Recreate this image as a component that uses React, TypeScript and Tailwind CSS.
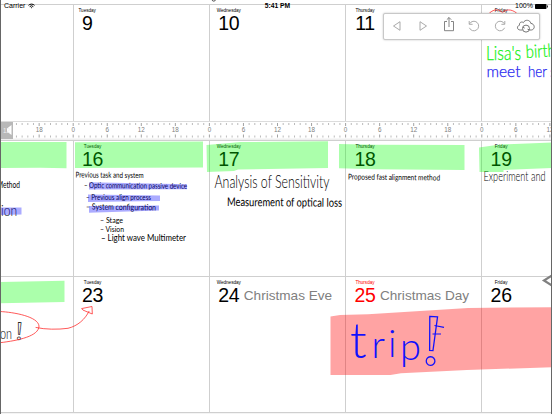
import type { ReactNode } from "react";

type Day = { name: string; num?: string; note?: string; holiday?: boolean };

const WEEKS: Day[][] = [
  [
    { name: "" },
    { name: "Tuesday", num: "9" },
    { name: "Wednesday", num: "10" },
    { name: "Thursday", num: "11" },
    { name: "Friday", num: "12" },
  ],
  [
    { name: "" },
    { name: "Tuesday", num: "16" },
    { name: "Wednesday", num: "17" },
    { name: "Thursday", num: "18" },
    { name: "Friday", num: "19" },
  ],
  [
    { name: "" },
    { name: "Tuesday", num: "23" },
    { name: "Wednesday", num: "24", note: "Christmas Eve" },
    { name: "Thursday", num: "25", note: "Christmas Day", holiday: true },
    { name: "Friday", num: "26" },
  ],
];

const DAY_WIDTH = 136.2;
const HOUR = DAY_WIDTH / 24;

// ink notes written on top of the calendar
const NOTES = [
  { text: "Previous task and system", x: 75.5, y: 177.5, w: 68, size: 8, tilt: 0.5 },
  { text: "– Optic communication passive device", x: 84, y: 188, w: 103, size: 8, tilt: 0.5 },
  { text: "– Previous align process", x: 86, y: 199.5, w: 65, size: 8, tilt: 0 },
  { text: "– System configuration", x: 86, y: 209.5, w: 70, size: 8.5, tilt: 0.8 },
  { text: "– Stage", x: 100, y: 222.5, w: 23, size: 7.5, tilt: 0 },
  { text: "– Vision", x: 100, y: 231.5, w: 24, size: 7.5, tilt: 0 },
  { text: "– Light wave Multimeter", x: 101, y: 240.5, w: 85, size: 9, tilt: 0 },
  { text: "Method", x: -3, y: 188, w: 23, size: 9, tilt: 0 },
  { text: "Analysis of Sensitivity", x: 214.5, y: 188, w: 115, size: 17, tilt: 0 },
  { text: "Measurement of optical loss", x: 227, y: 206, w: 115, size: 12, tilt: 0.4 },
  { text: "Proposed fast alignment method", x: 348, y: 179.5, w: 92, size: 8, tilt: 0.6 },
  { text: "Experiment and", x: 483.5, y: 181, w: 62, size: 13, tilt: 0 },
];

function DayLabel({ day }: { day: Day }) {
  if (!day.num) return null;
  const color = day.holiday ? "text-[#ff0000]" : "text-black";
  const indent = day.num.length === 1 ? "pl-[2.4px]" : "pl-[7.8px]";
  return (
    <div className={`flex items-end pt-[4px] ${indent} ${color}`}>
      <div className="flex w-[22px] flex-col items-center">
        <span className="h-[4.6px] whitespace-nowrap text-[4.6px] leading-[4.6px]">{day.name}</span>
        <span className="text-[19.5px] leading-[18px] tracking-[-0.3px]">{day.num}</span>
      </div>
      {day.note && (
        <span className="ml-[4px] whitespace-nowrap text-[13.6px] leading-[16px] text-[#808080]">{day.note}</span>
      )}
    </div>
  );
}

function Ruler() {
  const hours = Array.from({ length: 109 }, (_, i) => i);
  return (
    <svg className="block h-[19px] w-[615px]" viewBox="0 0 615 19">
      <rect width="615" height="19" fill="#fff" />
      <rect width="615" height="1" fill="#dcdcdc" />
      <rect y="17.5" width="615" height="1.5" fill="#efefef" />
      {hours.map((h) => (
        <g key={h} stroke={h % 6 === 0 ? "#8a8a8a" : "#a8a8a8"} strokeWidth="0.8">
          <line x1={h * HOUR} x2={h * HOUR} y1="2" y2={h % 6 === 0 ? 5 : 4} />
          <line x1={h * HOUR} x2={h * HOUR} y1={h % 6 === 0 ? 13.5 : 14.5} y2="16.5" />
        </g>
      ))}
      {hours
        .filter((h) => h % 6 === 0 && h !== 6)
        .map((h) => (
          <text key={h} x={h * HOUR} y="11" textAnchor="middle" fontSize="6.3" fill="#808080">
            {h % 24}
          </text>
        ))}
    </svg>
  );
}

function ToolButton({ children }: { children: ReactNode }) {
  return (
    <button className="flex h-6 flex-1 items-center justify-center">
      <svg className="h-5 w-5" viewBox="0 0 20 20" fill="none" stroke="#a0a0a0" strokeWidth="0.9">
        {children}
      </svg>
    </button>
  );
}

function Toolbar() {
  return (
    <div className="absolute left-[383px] top-[12.5px] flex h-[27px] w-[157px] items-center rounded-[2px] border border-[#c8c8c8] bg-white shadow-[0_0_2px_rgba(0,0,0,0.25)]">
      <ToolButton>
        <path d="M13 5.7v8.6L6.5 10z" />
      </ToolButton>
      <ToolButton>
        <path d="M7 5.7v8.6l6.5-4.3z" />
      </ToolButton>
      <ToolButton>
        <path d="M8 5.500H5.500v9.200h9V5.500H12M10 11V1.500M7.800 3.700 10 1.500l2.200 2.200" stroke="#777" />
      </ToolButton>
      <ToolButton>
        <path d="M5.600 7.800A4.800 4.800 0 1 1 5.400 11.800M5.200 5v3.300h3.400" />
      </ToolButton>
      <ToolButton>
        <path d="M14.400 7.800a4.800 4.800 0 1 0 .2 4M14.800 5v3.300h-3.400" />
      </ToolButton>
      <ToolButton>
        <path
          d="M6.500 14H4.300C.8 14 .6 10 3.500 9.200 3 6 6.300 5.300 7.300 6.700 9 3 14.400 3.800 14.800 7.400c4 .2 4.800 6 .6 6.600H13.500"
          stroke="#666"
        />
        <circle cx="10" cy="12.600" r="3.500" stroke="#666" />
        <path d="M6.700 11.300l2 .8M11.500 13.200l2 .6" stroke="#666" />
      </ToolButton>
    </div>
  );
}

function StatusBar() {
  return (
    <div className="absolute inset-x-0 top-0 grid h-3 grid-cols-3 items-center px-1 text-[7px] leading-3 text-black">
      <div className="flex items-center gap-[2.5px]">
        <span>Carrier</span>
        <svg className="h-[6px] w-[7px]" viewBox="0 0 14 11" fill="none" stroke="#000" strokeWidth="2">
          <path d="M1 4.200a8.500 8.500 0 0 1 12 0M3.400 6.800a5 5 0 0 1 7.200 0" />
          <path d="M5.400 8.600 7 10.400l1.600-1.800a2.300 2.300 0 0 0-3.200 0z" fill="#000" stroke="none" />
        </svg>
      </div>
      <span className="pl-[3px] text-center text-[6.700px] font-bold">5:41 PM</span>
      <div className="flex items-center justify-end gap-[2px]">
        <span>100%</span>
        <svg className="h-[5px] w-[13px]" viewBox="0 0 13 5">
          <rect width="11.500" height="5" rx="0.8" />
          <rect x="12" y="1.500" width="0.800" height="2" />
        </svg>
      </div>
    </div>
  );
}

function InkLayer() {
  return (
    <svg className="pointer-events-none absolute inset-0 h-[414px] w-[552px]" viewBox="0 0 552 414">
      <g fontFamily="Lato, sans-serif" fill="#000">
        {NOTES.map((n) => (
          <text
            key={n.text}
            x={n.x}
            y={n.y}
            fontSize={n.size}
            fontWeight={n.size > 12 ? 300 : 400}
            textLength={n.w}
            lengthAdjust="spacingAndGlyphs"
            transform={`rotate(${n.tilt} ${n.x} ${n.y})`}
          >
            {n.text}
          </text>
        ))}
        <text x="1" y="215.500" fontSize="16" fontWeight="300" textLength="16" lengthAdjust="spacingAndGlyphs">
          ion
        </text>
        <text x="0" y="338.500" fontSize="15" fontWeight="300" textLength="12" lengthAdjust="spacingAndGlyphs">
          on
        </text>
      </g>
      <text
        x="15"
        y="339.500"
        fontFamily="'Liberation Serif', serif"
        fontSize="26"
        fill="none"
        stroke="#222"
        strokeWidth="0.7"
        transform="rotate(3 19 330)"
      >
        !
      </text>
      <g fontFamily="Lato, sans-serif" fontWeight="300">
        <g fill="#10f010" stroke="#10f010" strokeWidth="0.25">
          <text x="486" y="59.500" fontSize="19" textLength="35" lengthAdjust="spacingAndGlyphs">
            Lisa's
          </text>
          <text x="526" y="58" fontSize="18" textLength="30" lengthAdjust="spacingAndGlyphs" transform="rotate(-3 526 58)">
            birth
          </text>
        </g>
        <g fill="#2424f0" stroke="#2424f0" strokeWidth="0.25">
          <text x="486.500" y="77" fontSize="16" textLength="34" lengthAdjust="spacingAndGlyphs">
            meet
          </text>
          <text x="528" y="76.500" fontSize="15.500" textLength="28" lengthAdjust="spacingAndGlyphs">
            her s
          </text>
        </g>
      </g>

      <g fill="#00ff00" fillOpacity="0.33">
        <path d="M0 142h66.500v26.300L40 167.700 0 168z" />
        <path d="M75 142.300 203 141.500v26L75 168z" />
        <path d="M206.500 145l34-3 87.500-.7v26.800l-90 1.500-4 1.500-27 1z" />
        <path d="M339 144l36 .7 89.500.2v25l-90.500-.7-35-1z" />
        <path d="M479 147.500 500 144.500l52-2v25.500l-48.500 2v2h-24z" />
        <path d="M0 282l64.500-1.200v21.200L0 303.200z" />
      </g>
      <g fill="#0000ff" fillOpacity="0.33">
        <path d="M89 182.300l98 2v5l-98 .3z" />
        <path d="M88 194.500l72 1v5.500l-72 1z" />
        <path d="M89 206l70-.5v5l-70 2.300z" />
        <path d="M0 207.500h21.500v7L0 215z" />
      </g>
      <path
        d="M330.500 316.500 340 315l28-.7 100-6.300 84-.8v60l-85 2.800-66 3.200-10.500 1.800h-60z"
        fill="#ff0000"
        fillOpacity="0.36"
      />

      <g fontFamily="Lato, sans-serif" fontWeight="300" fill="#1010ff">
        <text x="350" y="358" fontSize="49">
          t
        </text>
        <text x="371.500 388 400" y="358 357 360" fontSize="38">
          rip
        </text>
        <text
          x="420"
          y="364.500"
          fontFamily="'Liberation Serif', serif"
          fontSize="73"
          fill="none"
          stroke="#1010ff"
          strokeWidth="1.300"
          transform="rotate(4 433 340)"
        >
          !
        </text>
        <path d="M434.500 325.500l9.500 1.800M432.500 334h8.500" fill="none" stroke="#1010ff" strokeWidth="1.200" />
      </g>

      <g fill="none" stroke="#ff3030" strokeWidth="0.8" strokeLinecap="round">
        <path d="M0 311.500c14 .7 38 5 39 14.500C39 336 19 340.500 0 342.700" />
        <path d="M36 327.500c9 2 22 2.200 32 .8 10-2.500 17-9 21-17" />
        <path d="M82 308.500l10-2 .3 7.500-9-3.800z" />
        <path d="M489.500 13c5-4.500 9.500-4 13-.3 3-3.500 9-4 14 .3" />
      </g>
      <path d="M552 275.500l-8 5 8 5" fill="none" stroke="#808080" strokeWidth="2.200" />
      <path d="M212 0c.5 1.500 3 1.500 3.500 0" fill="none" stroke="#222" strokeWidth="0.8" />
    </svg>
  );
}

export default function App() {
  return (
    <div className="relative h-[414px] w-[552px] overflow-hidden bg-white font-['Liberation_Sans',Arial,sans-serif]">
      <div className="-ml-[63.4px] flex w-[681px] flex-col pt-[4px]">
        {WEEKS.map((week, i) => (
          <div key={i} className="flex h-[136px] flex-col border-t border-[#cfcfcf]">
            <div className="grid flex-1 grid-cols-[repeat(5,136.2px)]">
              {week.map((day, j) => (
                <div key={j} className="border-l border-[#cfcfcf]">
                  <DayLabel day={day} />
                </div>
              ))}
            </div>
            {i === 0 && <Ruler />}
          </div>
        ))}
        <div className="h-2 border-t border-[#cfcfcf] bg-[#f4f4f4]" />
      </div>

      <InkLayer />

      {/* collapsed side panel handle */}
      <div className="absolute left-0 top-[121.500px] flex h-[17px] w-[13px] items-center justify-center bg-[#b8b8b8]">
        <svg className="h-3 w-3" viewBox="0 0 12 12">
          <path d="M10.500 1v10L6 7.500V4.500z" fill="#fff" />
          <text x="2" y="8.500" fontSize="6.300" fill="#eee">
            12
          </text>
        </svg>
      </div>

      <StatusBar />
      <Toolbar />
      <div className="absolute inset-y-0 left-0 w-px bg-[#666]" />
      <div className="absolute inset-y-0 right-0 w-px bg-[#666]" />
    </div>
  );
}
